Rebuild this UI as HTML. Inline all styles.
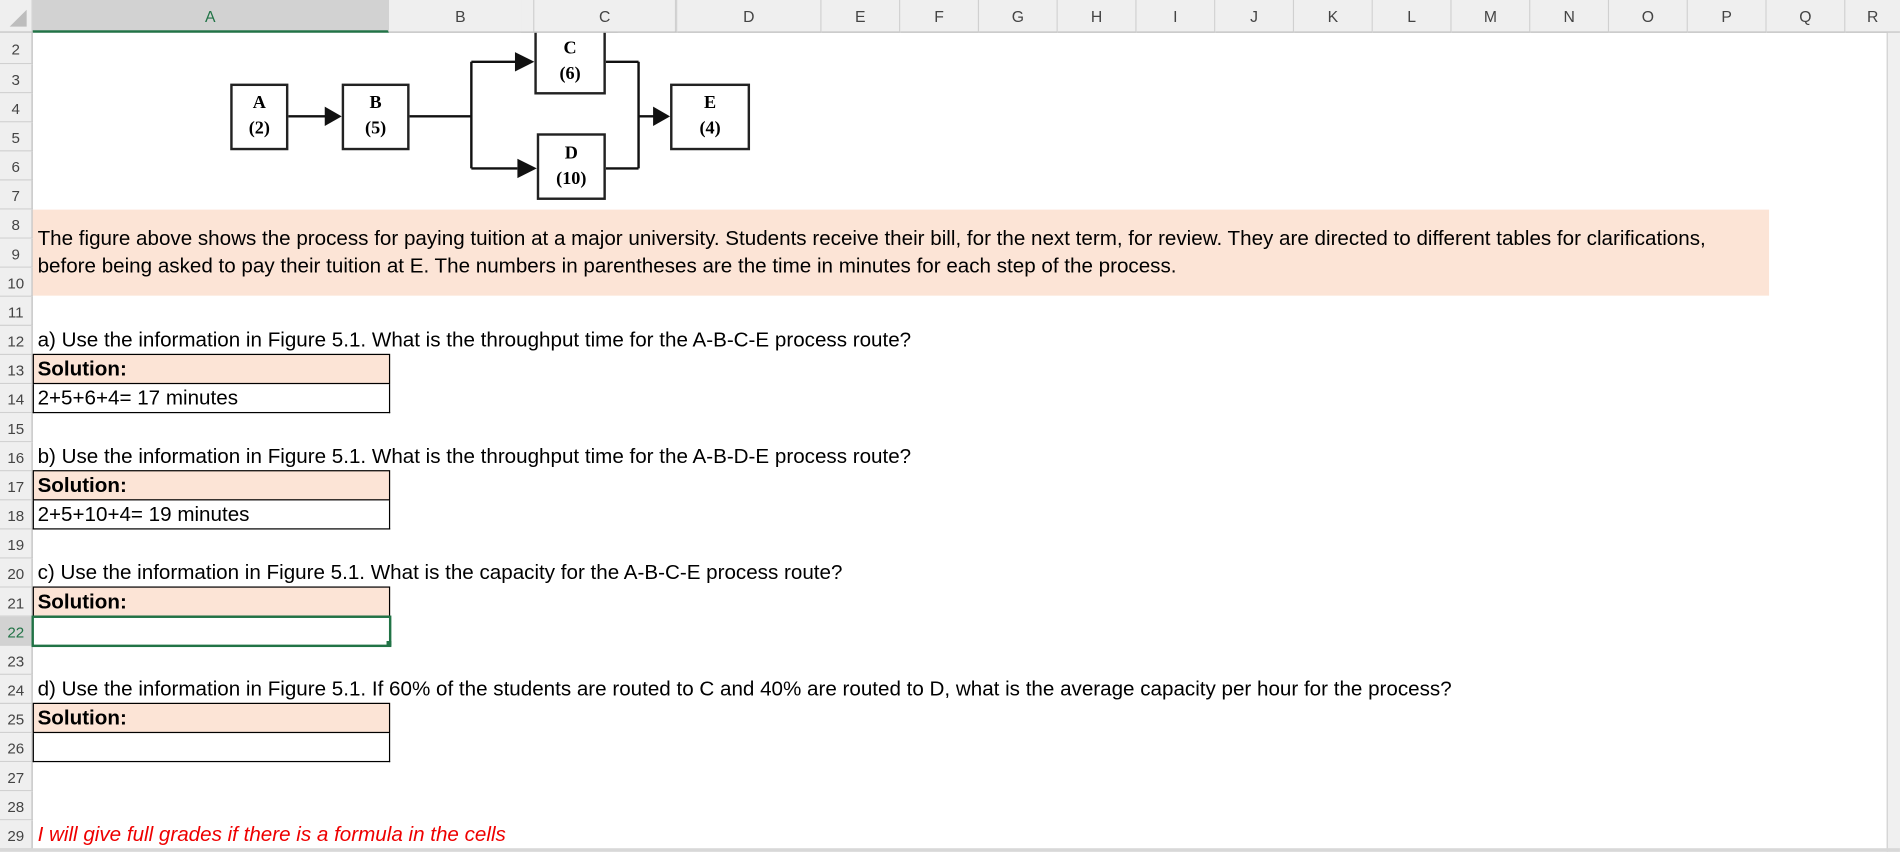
<!DOCTYPE html>
<html><head><meta charset="utf-8"><style>
html,body{margin:0;padding:0;width:1900px;height:852px;overflow:hidden;background:#fff}
#w{position:absolute;left:0;top:0;width:1568px;height:703px;transform:scale(1.2117);transform-origin:0 0;font-family:"Liberation Sans",sans-serif}
.a{position:absolute}
.ch{position:absolute;top:0;height:26px;border-right:1px solid #d0d0d0;background:#efefef;font-size:13px;color:#444;text-align:center;line-height:28px;border-bottom:1px solid #bdbdbd}
.rh{position:absolute;left:0;width:26px;height:23px;border-bottom:1px solid #d0d0d0;border-right:1px solid #bdbdbd;background:#efefef;font-size:12.5px;color:#444;text-align:center;line-height:26px}
.t{position:absolute;left:31px;font-size:17px;white-space:nowrap;transform:scaleX(1.0);transform-origin:0 0;color:#000}
.box{position:absolute;left:27px;width:293px;height:23px;border:1px solid #000;border-top:none}
.sol{background:#fce4d6;border-top:1px solid #000}
.bx{position:absolute;border:2px solid #222;background:#fff;font-family:"Liberation Serif",serif;font-weight:bold;font-size:15px;text-align:center;line-height:21px}
</style></head><body><div id="w">
<div class="a" style="left:0;top:0;width:1568px;height:27px;background:#efefef"></div>
<div class="ch" style="left:0;width:26px"></div>
<div class="a" style="left:8px;top:8px;width:0;height:0;border-left:14px solid transparent;border-bottom:14px solid #bdbdbd"></div>
<div class="ch" style="left:27px;width:293px;background:#d2d2d2;border-bottom:2px solid #217346;height:25px;color:#217346">A</div>
<div class="ch" style="left:321px;width:118px">B</div>
<div class="ch" style="left:440px;width:118px">C</div>
<div class="ch" style="left:559px;width:118px">D</div>
<div class="ch" style="left:678px;width:64px">E</div>
<div class="ch" style="left:743px;width:64px">F</div>
<div class="ch" style="left:808px;width:64px">G</div>
<div class="ch" style="left:873px;width:64px">H</div>
<div class="ch" style="left:938px;width:64px">I</div>
<div class="ch" style="left:1003px;width:64px">J</div>
<div class="ch" style="left:1068px;width:64px">K</div>
<div class="ch" style="left:1133px;width:64px">L</div>
<div class="ch" style="left:1198px;width:64px">M</div>
<div class="ch" style="left:1263px;width:64px">N</div>
<div class="ch" style="left:1328px;width:64px">O</div>
<div class="ch" style="left:1393px;width:64px">P</div>
<div class="ch" style="left:1458px;width:64px">Q</div>
<div class="ch" style="left:1523px;width:45px;border-right:none">R</div>
<div class="rh" style="top:27px;height:25px;line-height:28px">2</div>
<div class="rh" style="top:53px">3</div><div class="rh" style="top:77px">4</div><div class="rh" style="top:101px">5</div><div class="rh" style="top:125px">6</div><div class="rh" style="top:149px">7</div><div class="rh" style="top:173px">8</div><div class="rh" style="top:197px">9</div><div class="rh" style="top:221px">10</div><div class="rh" style="top:245px">11</div><div class="rh" style="top:269px">12</div><div class="rh" style="top:293px">13</div><div class="rh" style="top:317px">14</div><div class="rh" style="top:341px">15</div><div class="rh" style="top:365px">16</div><div class="rh" style="top:389px">17</div><div class="rh" style="top:413px">18</div><div class="rh" style="top:437px">19</div><div class="rh" style="top:461px">20</div><div class="rh" style="top:485px">21</div><div class="rh" style="top:509px;background:#d2d2d2;color:#217346">22</div><div class="rh" style="top:533px">23</div><div class="rh" style="top:557px">24</div><div class="rh" style="top:581px">25</div><div class="rh" style="top:605px">26</div><div class="rh" style="top:629px">27</div><div class="rh" style="top:653px">28</div><div class="rh" style="top:677px">29</div>
<div class="a" style="left:1557px;top:27px;width:11px;height:676px;background:#f0f0f0;border-left:1px solid #d0d0d0"></div>
<div class="a" style="left:0;top:700px;width:1568px;height:3px;background:#d8d8d8"></div>

<svg class="a" style="left:0;top:27px" width="640" height="150" viewBox="0 27 640 150">
<g stroke="#111" stroke-width="2" fill="none">
<path d="M238 96H270M338 96H389M389 51V139M389 51H427M389 139H427M500 51H527M500 139H527M527 51V139M527 96H541"/>
</g>
<g fill="#111"><path d="M268 88L282 96L268 104Z"/><path d="M425 43L441 51L425 59Z"/><path d="M427 131L443 139L427 147Z"/><path d="M539 88L553 96L539 104Z"/></g>
</svg>
<div class="bx" style="left:190px;top:69px;width:48px;height:55px;padding-top:4px;box-sizing:border-box">A<br>(2)</div>
<div class="bx" style="left:282px;top:69px;width:56px;height:55px;padding-top:4px;box-sizing:border-box">B<br>(5)</div>
<div class="bx" style="left:441px;top:20px;width:59px;height:58px;padding-top:8px;box-sizing:border-box">C<br>(6)</div>
<div class="a" style="left:430px;top:0;width:80px;height:27px;background:#efefef;border-bottom:1px solid #bdbdbd;box-sizing:border-box"></div>
<div class="a" style="left:440px;top:0;width:118px;height:26px;border-right:1px solid #d0d0d0;border-left:1px solid #d0d0d0;font-size:13px;color:#444;text-align:center;line-height:28px;box-sizing:border-box">C</div>
<div class="bx" style="left:443px;top:110px;width:57px;height:55px;padding-top:5px;box-sizing:border-box">D<br>(10)</div>
<div class="bx" style="left:553px;top:69px;width:66px;height:55px;padding-top:4px;box-sizing:border-box">E<br>(4)</div>

<div class="a" style="left:27px;top:173px;width:1433px;height:71px;background:#fce4d6"></div>
<div class="t" style="top:187px">The figure above shows the process for paying tuition at a major university. Students receive their bill, for the next term, for review. They are directed to different tables for clarifications,</div>
<div class="t" style="top:210px">before being asked to pay their tuition at E. The numbers in parentheses are the time in minutes for each step of the process.</div>

<div class="t" style="top:271px">a) Use the information in Figure 5.1. What is the throughput time for the A-B-C-E process route?</div>
<div class="box sol" style="top:292px"></div><div class="t" style="top:295px;font-weight:bold">Solution:</div>
<div class="box" style="top:317px"></div><div class="t" style="top:319px">2+5+6+4= 17 minutes</div>

<div class="t" style="top:367px">b) Use the information in Figure 5.1. What is the throughput time for the A-B-D-E process route?</div>
<div class="box sol" style="top:388px"></div><div class="t" style="top:391px;font-weight:bold">Solution:</div>
<div class="box" style="top:413px"></div><div class="t" style="top:415px">2+5+10+4= 19 minutes</div>

<div class="t" style="top:463px">c) Use the information in Figure 5.1. What is the capacity for the A-B-C-E process route?</div>
<div class="box sol" style="top:484px"></div><div class="t" style="top:487px;font-weight:bold">Solution:</div>
<div class="a" style="left:26px;top:508px;width:293px;height:22px;border:2px solid #217346"></div>
<div class="a" style="left:319px;top:529px;width:4px;height:4px;background:#217346"></div>

<div class="t" style="top:559px">d) Use the information in Figure 5.1. If 60% of the students are routed to C and 40% are routed to D, what is the average capacity per hour for the process?</div>
<div class="box sol" style="top:580px"></div><div class="t" style="top:583px;font-weight:bold">Solution:</div>
<div class="box" style="top:605px"></div>

<div class="t" style="top:679px;color:#e00;font-style:italic">I will give full grades if there is a formula in the cells</div>
</div></body></html>
